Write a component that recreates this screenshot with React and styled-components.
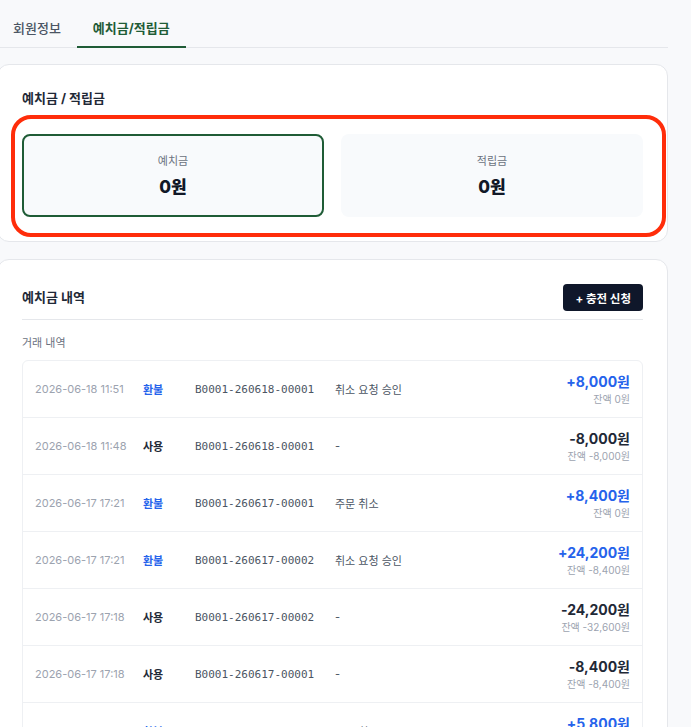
import React from "react";
import styled, { createGlobalStyle } from "styled-components";

const GlobalStyle = createGlobalStyle`
  html, body {
    margin: 0;
    padding: 0;
    background: #f8f9fb;
    font-family: "Inter", "Noto Sans CJK KR", "Noto Sans", sans-serif;
    color: #1f2937;
  }
  * { box-sizing: border-box; }
`;

const Page = styled.div`
  width: 671px;
  margin-left: -3px;
  padding-top: 7px;
  display: flex;
  flex-direction: column;
`;

const TabBar = styled.div`
  display: flex;
  border-bottom: 1px solid #e5e7eb;
`;

const Tab = styled.div`
  padding: 12px 16px 9px;
  font-size: 13px;
  line-height: 18px;
  font-weight: ${(p) => (p.$active ? 700 : 500)};
  color: ${(p) => (p.$active ? "#1f5c36" : "#4b5563")};
  border-bottom: 2px solid ${(p) => (p.$active ? "#1f5c36" : "transparent")};
  margin-bottom: -1px;
`;

const Card = styled.section`
  background: #ffffff;
  border: 1px solid #e5e7eb;
  border-radius: 12px;
  padding: 24px;
  margin-top: ${(p) => p.$gap}px;
`;

const CardTitle = styled.h2`
  margin: 0;
  font-size: 13px;
  line-height: 19px;
  font-weight: 700;
  color: #1f2937;
`;

const SummaryGrid = styled.div`
  position: relative;
  margin-top: 26px;
  display: grid;
  grid-template-columns: 1fr 1fr;
  gap: 17px;
`;

/* highlight ring laid over the balance boxes */
const Ring = styled.div`
  position: absolute;
  left: -11px;
  right: -23px;
  top: -19px;
  bottom: -20px;
  border: 4px solid #ff2d0a;
  border-radius: 20px;
  pointer-events: none;
`;

const BalanceBox = styled.div`
  height: 83px;
  border-radius: 8px;
  background: #f8fafc;
  border: 2px solid ${(p) => (p.$selected ? "#1f5c36" : "transparent")};
  display: flex;
  flex-direction: column;
  align-items: center;
  justify-content: center;
  gap: 6px;
`;

const BalanceLabel = styled.div`
  font-size: 11px;
  line-height: 16px;
  color: #6b7280;
`;

const BalanceValue = styled.div`
  font-size: 17px;
  line-height: 24px;
  font-weight: 800;
  color: #111827;
`;

const HistoryHeader = styled.div`
  display: flex;
  align-items: center;
  justify-content: space-between;
  padding-bottom: 8px;
  border-bottom: 1px solid #e5e7eb;
`;

const ChargeButton = styled.button`
  height: 27px;
  padding: 0 12px;
  border: none;
  border-radius: 4px;
  background: #0f172a;
  color: #ffffff;
  font-family: inherit;
  font-size: 11.5px;
  font-weight: 700;
`;

const SubLabel = styled.div`
  margin-top: 15px;
  font-size: 11px;
  line-height: 16px;
  color: #6b7280;
`;

const List = styled.div`
  margin-top: 9px;
  border: 1px solid #eef0f3;
  border-radius: 6px;
`;

const Row = styled.div`
  display: grid;
  grid-template-columns: 108px 52px 140px 1fr auto;
  align-items: center;
  padding: 11px 12px;
  border-top: 1px solid #eef0f3;
  &:first-child { border-top: none; }
`;

const DateCell = styled.div`
  font-size: 11px;
  color: #9ca3af;
`;

const TypeCell = styled.div`
  font-size: 11px;
  font-weight: 700;
  color: ${(p) => (p.$refund ? "#2563eb" : "#1f2937")};
`;

const OrderCell = styled.div`
  font-family: "DejaVu Sans Mono", "Liberation Mono", monospace;
  font-size: 11px;
  color: #4b5563;
`;

const DescCell = styled.div`
  font-size: 11px;
  color: #4b5563;
`;

const AmountCell = styled.div`
  display: flex;
  flex-direction: column;
  align-items: flex-end;
`;

const Amount = styled.div`
  font-size: 14px;
  line-height: 20px;
  font-weight: 700;
  color: ${(p) => (p.$plus ? "#2563eb" : "#1f2937")};
`;

const Balance = styled.div`
  font-size: 10px;
  line-height: 14px;
  color: #9ca3af;
`;

const rows = [
  { date: "2026-06-18 11:51", type: "환불", order: "B0001-260618-00001", desc: "취소 요청 승인", amount: "+8,000원", balance: "잔액 0원" },
  { date: "2026-06-18 11:48", type: "사용", order: "B0001-260618-00001", desc: "-", amount: "-8,000원", balance: "잔액 -8,000원" },
  { date: "2026-06-17 17:21", type: "환불", order: "B0001-260617-00001", desc: "주문 취소", amount: "+8,400원", balance: "잔액 0원" },
  { date: "2026-06-17 17:21", type: "환불", order: "B0001-260617-00002", desc: "취소 요청 승인", amount: "+24,200원", balance: "잔액 -8,400원" },
  { date: "2026-06-17 17:18", type: "사용", order: "B0001-260617-00002", desc: "-", amount: "-24,200원", balance: "잔액 -32,600원" },
  { date: "2026-06-17 17:18", type: "사용", order: "B0001-260617-00001", desc: "-", amount: "-8,400원", balance: "잔액 -8,400원" },
  { date: "2026-06-15 09:40", type: "환불", order: "", desc: "주문 취소: B0001-260613-00001", amount: "+5,800원", balance: "잔액 -8,000원" },
];

export default function App() {
  return (
    <>
      <GlobalStyle />
      <Page>
        <TabBar>
          <Tab>회원정보</Tab>
          <Tab $active>예치금/적립금</Tab>
        </TabBar>

        <Card $gap={16}>
          <CardTitle>예치금 / 적립금</CardTitle>
          <SummaryGrid>
            <BalanceBox $selected>
              <BalanceLabel>예치금</BalanceLabel>
              <BalanceValue>0원</BalanceValue>
            </BalanceBox>
            <BalanceBox>
              <BalanceLabel>적립금</BalanceLabel>
              <BalanceValue>0원</BalanceValue>
            </BalanceBox>
            <Ring />
          </SummaryGrid>
        </Card>

        <Card $gap={17}>
          <HistoryHeader>
            <CardTitle>예치금 내역</CardTitle>
            <ChargeButton>+ 충전 신청</ChargeButton>
          </HistoryHeader>
          <SubLabel>거래 내역</SubLabel>
          <List>
            {rows.map((r, i) => (
              <Row key={i}>
                <DateCell>{r.date}</DateCell>
                <TypeCell $refund={r.type === "환불"}>{r.type}</TypeCell>
                <OrderCell>{r.order}</OrderCell>
                <DescCell>{r.desc}</DescCell>
                <AmountCell>
                  <Amount $plus={r.amount.startsWith("+")}>{r.amount}</Amount>
                  <Balance>{r.balance}</Balance>
                </AmountCell>
              </Row>
            ))}
          </List>
        </Card>
      </Page>
    </>
  );
}
